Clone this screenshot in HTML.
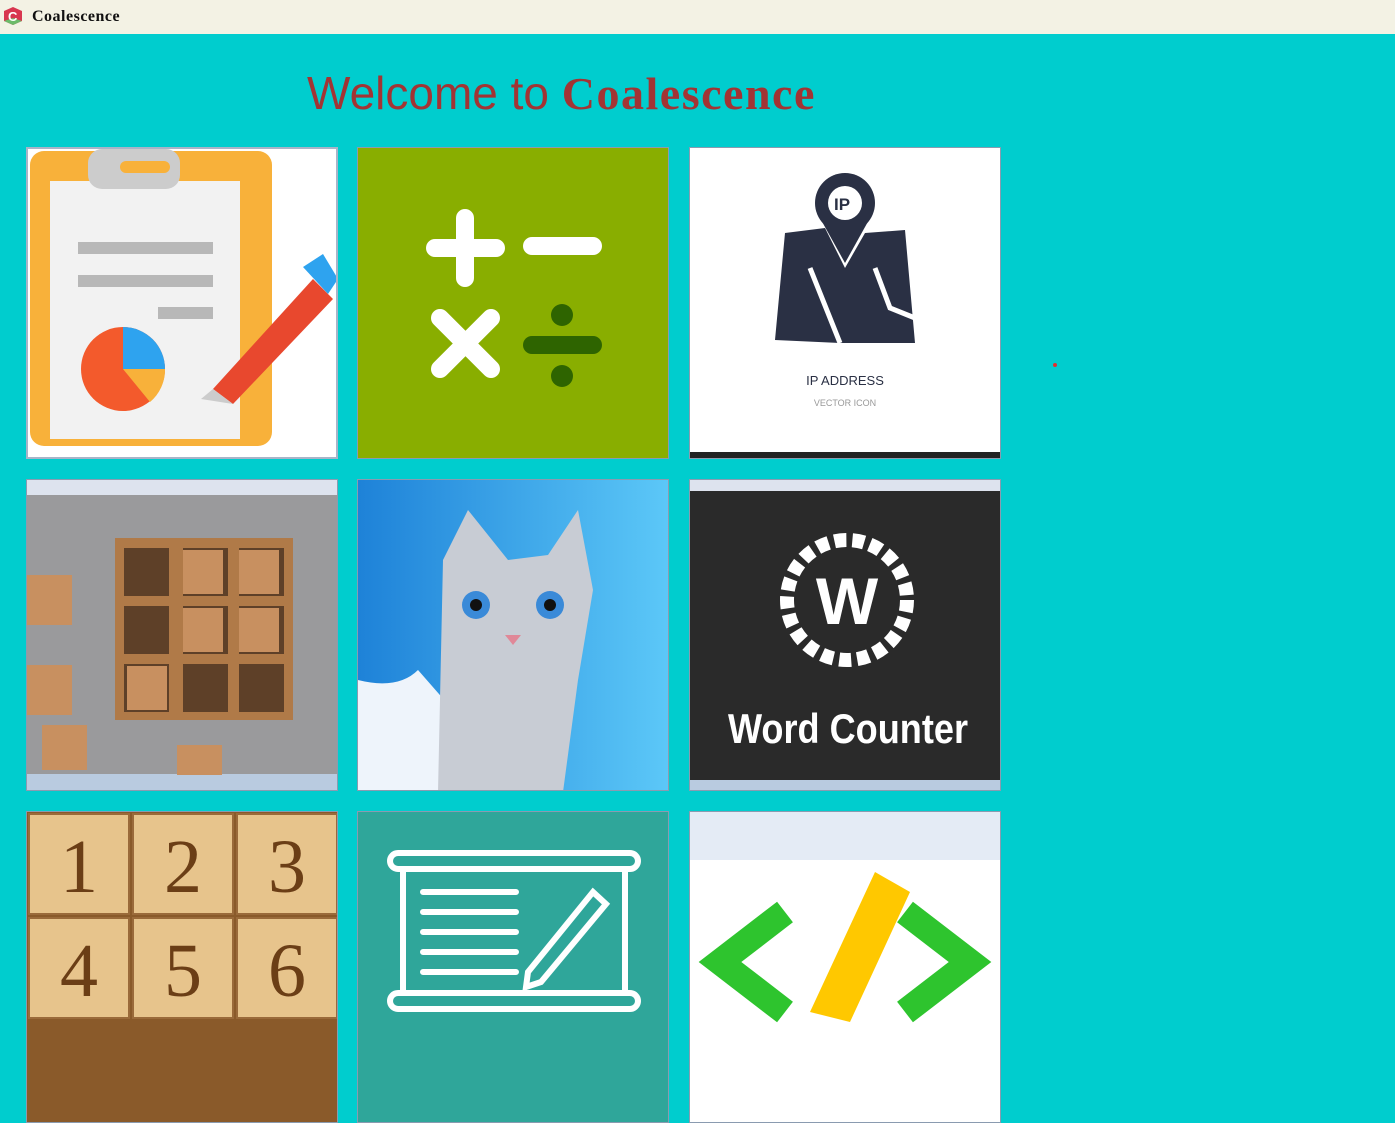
<!DOCTYPE html>
<html><head><meta charset="utf-8"><style>
body{margin:0;width:1395px;height:1008px;overflow:hidden;background:#00cdce;position:relative;font-family:"Liberation Sans",sans-serif}
.bar{position:absolute;left:0;top:0;width:1395px;height:34px;background:#f3f2e4}
.bar span{position:absolute;left:32px;top:8px;font:bold 16px "Liberation Serif",serif;color:#111;letter-spacing:0.5px}
h1{position:absolute;left:307px;top:66px;margin:0;font-weight:normal;font-size:46px;color:#a23434;white-space:nowrap}
h1 b{font-family:"Liberation Serif",serif;font-weight:bold;font-size:46px;letter-spacing:1.5px}
.t{position:absolute;width:312px;height:312px;overflow:hidden;box-sizing:border-box;border:1px solid #8a9bb0}
.t svg{display:block}
</style></head><body>
<div class="bar"><svg style="position:absolute;left:3px;top:6px" width="20" height="20"><polygon points="10,1 19,5 19,15 10,19 1,15 1,5" fill="#d8364f"/><polygon points="1,15 10,19 19,15 10,12" fill="#6cbb6a"/><text x="5" y="15" font-size="13" font-weight="bold" fill="#fff" font-family="Liberation Sans">C</text></svg><span>Coalescence</span></div>
<h1>Welcome to <b>Coalescence</b></h1>
<div style="position:absolute;left:1053px;top:363px;width:4px;height:4px;border-radius:2px;background:#e03030"></div>

<div class="t" style="left:26px;top:147px;border:2px solid #a8b4c8"><svg width="312" height="312"><rect width="312" height="312" fill="#fff"/><rect x="2" y="2" width="242" height="295" rx="14" fill="#f8b13a"/><rect x="22" y="32" width="190" height="258" fill="#f2f2f2"/><rect x="60" y="0" width="92" height="40" rx="14" fill="#ccc"/><rect x="92" y="12" width="50" height="12" rx="6" fill="#f8b13a"/><rect x="50" y="93" width="135" height="12" fill="#b8b8b8"/><rect x="50" y="126" width="135" height="12" fill="#b8b8b8"/><rect x="130" y="158" width="55" height="12" fill="#b8b8b8"/><circle cx="95" cy="220" r="42" fill="#f35a2c"/><path d="M95 220V178A42 42 0 0 1 137 220Z" fill="#2ea3ef"/><path d="M95 220H137A42 42 0 0 1 122 253Z" fill="#f8b13a"/><path d="M185 240L285 130L305 150L205 255Z" fill="#e8482e"/><path d="M275 118L295 105L310 130L300 145Z" fill="#2ea3ef"/><path d="M185 240L205 255L173 250Z" fill="#ccc"/></svg></div>

<div class="t" style="left:357px;top:147px"><svg width="312" height="312"><rect width="312" height="312" fill="#89ae00"/><g stroke="#fff" stroke-width="18" stroke-linecap="round"><path d="M77 100H138M107 70V130M174 98H235M82 170L133 221M133 170L82 221"/></g><path d="M174 197H235" stroke="#2e6400" stroke-width="18" stroke-linecap="round"/><circle cx="204" cy="167" r="11" fill="#2e6400"/><circle cx="204" cy="228" r="11" fill="#2e6400"/></svg></div>

<div class="t" style="left:689px;top:147px"><svg width="312" height="312"><rect width="312" height="312" fill="#fff"/><path d="M95 85L135 80L155 120L175 85L215 82L225 195L150 195L85 192Z" fill="#2a3044"/><circle cx="155" cy="55" r="30" fill="#2a3044"/><path d="M130 70L155 115L180 70Z" fill="#2a3044"/><circle cx="155" cy="55" r="17" fill="#fff"/><text x="144" y="62" font-size="17" font-weight="bold" fill="#2a3044" font-family="Liberation Sans">IP</text><path d="M120 120L150 195M185 120L200 160L225 170" stroke="#fff" stroke-width="5" fill="none"/><text x="155" y="237" text-anchor="middle" font-size="13" fill="#2a3044" font-family="Liberation Sans">IP ADDRESS</text><text x="155" y="258" text-anchor="middle" font-size="9" fill="#999" font-family="Liberation Sans">VECTOR ICON</text><rect y="304" width="312" height="8" fill="#222"/></svg></div>

<div class="t" style="left:26px;top:479px"><svg width="312" height="312"><rect width="312" height="312" fill="#9a9a9c"/><rect width="312" height="15" fill="#dde3ee"/><rect y="294" width="312" height="18" fill="#b9cbe0"/><rect x="88" y="58" width="178" height="182" fill="#b07a48"/><g fill="#5e4028"><rect x="97" y="68" width="45" height="48"/><rect x="156" y="68" width="45" height="48"/><rect x="212" y="68" width="45" height="48"/><rect x="97" y="126" width="45" height="48"/><rect x="156" y="126" width="45" height="48"/><rect x="212" y="126" width="45" height="48"/><rect x="97" y="184" width="45" height="48"/><rect x="156" y="184" width="45" height="48"/><rect x="212" y="184" width="45" height="48"/></g><g fill="#c89060"><rect x="156" y="70" width="40" height="44"/><rect x="212" y="70" width="40" height="44"/><rect x="156" y="128" width="40" height="44"/><rect x="212" y="128" width="40" height="44"/><rect x="100" y="186" width="40" height="44"/><rect x="0" y="95" width="45" height="50"/><rect x="0" y="185" width="45" height="50"/><rect x="15" y="245" width="45" height="45"/><rect x="150" y="265" width="45" height="30"/></g></svg></div>

<div class="t" style="left:357px;top:479px"><svg width="312" height="312"><defs><linearGradient id="g" x1="0" y1="0" x2="1" y2="0"><stop offset="0" stop-color="#1e82d8"/><stop offset="1" stop-color="#5cc8f8"/></linearGradient></defs><rect width="312" height="312" fill="url(#g)"/><path d="M0 200Q40 210 60 190L95 230L95 312L0 312Z" fill="#eef4fb"/><path d="M80 312L85 80L110 30L150 80L190 75L220 30L235 110L220 200L205 312Z" fill="#c8ccd4"/><circle cx="118" cy="125" r="14" fill="#3a8ad8"/><circle cx="192" cy="125" r="14" fill="#3a8ad8"/><circle cx="118" cy="125" r="6" fill="#111"/><circle cx="192" cy="125" r="6" fill="#111"/><path d="M147 155L163 155L155 165Z" fill="#e08898"/></svg></div>

<div class="t" style="left:689px;top:479px"><svg width="312" height="312"><rect width="312" height="312" fill="#2a2a2a"/><rect width="312" height="11" fill="#dde3ee"/><rect y="300" width="312" height="12" fill="#b9cbe0"/><circle cx="157" cy="120" r="60" fill="none" stroke="#fff" stroke-width="14" stroke-dasharray="12 6"/><text x="157" y="144" text-anchor="middle" font-size="66" font-weight="bold" fill="#fff" font-family="Liberation Sans Narrow, Liberation Sans">W</text><text x="158" y="263" text-anchor="middle" font-size="42" font-weight="bold" fill="#fff" font-family="Liberation Sans Narrow, Liberation Sans" textLength="240" lengthAdjust="spacingAndGlyphs">Word Counter</text></svg></div>

<div class="t" style="left:26px;top:811px"><svg width="312" height="312"><rect width="312" height="312" fill="#8a5a2a"/><g fill="#e7c48c" stroke="#9a6a3a" stroke-width="2"><rect x="2" y="2" width="100" height="100"/><rect x="106" y="2" width="100" height="100"/><rect x="210" y="2" width="100" height="100"/><rect x="2" y="106" width="100" height="100"/><rect x="106" y="106" width="100" height="100"/><rect x="210" y="106" width="100" height="100"/></g><g font-family="Liberation Serif" font-size="76" fill="#6b3e16" text-anchor="middle"><text x="52" y="80">1</text><text x="156" y="80">2</text><text x="260" y="80">3</text><text x="52" y="184">4</text><text x="156" y="184">5</text><text x="260" y="184">6</text></g></svg></div>

<div class="t" style="left:357px;top:811px"><svg width="312" height="312"><rect width="312" height="312" fill="#2fa69a"/><g fill="none" stroke="#fff" stroke-width="6" stroke-linecap="round"><rect x="32" y="41" width="248" height="16" rx="8"/><rect x="32" y="181" width="248" height="16" rx="8"/><path d="M45 57V181M267 57V181M65 80H158M65 100H158M65 120H158M65 140H158M65 160H158"/><path d="M170 160L235 80L248 92L183 170L168 175Z"/></g></svg></div>

<div class="t" style="left:689px;top:811px"><svg width="312" height="312"><rect width="312" height="312" fill="#fff"/><rect width="312" height="48" fill="#e4ebf5"/><path d="M95 100L30 150L95 200M215 100L280 150L215 200" fill="none" stroke="#2ec42e" stroke-width="26"/><path d="M120 200L185 60L220 80L160 210Z" fill="#ffc800"/></svg></div>
</body></html>
